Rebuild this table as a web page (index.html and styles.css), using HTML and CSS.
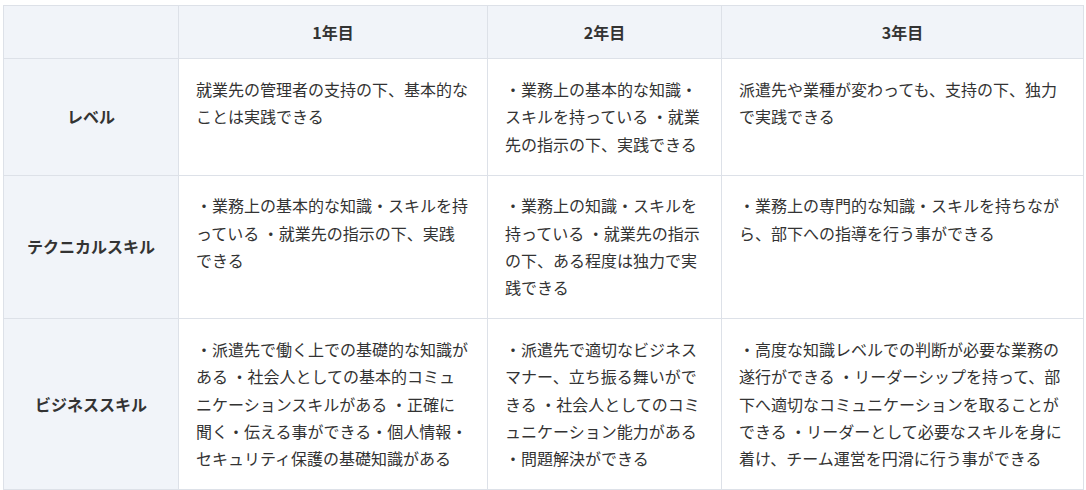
FILE: index.html
```html
<!DOCTYPE html>
<html lang="ja">
<head>
<meta charset="utf-8">
<title>スキル表</title>
<link rel="stylesheet" href="styles.css">
</head>
<body>
<div class="wrap">
<table class="skills">
  <colgroup>
    <col class="c0"><col class="c1"><col class="c2"><col class="c3">
  </colgroup>
  <thead>
    <tr>
      <th class="head corner"></th>
      <th class="head">1年目</th>
      <th class="head">2年目</th>
      <th class="head">3年目</th>
    </tr>
  </thead>
  <tbody>
    <tr>
      <th class="rowhead">レベル</th>
      <td>就業先の管理者の支持の下、基本的なことは実践できる</td>
      <td>・業務上の基本的な知識・スキルを持っている ・就業先の指示の下、実践できる</td>
      <td>派遣先や業種が変わっても、支持の下、独力で実践できる</td>
    </tr>
    <tr>
      <th class="rowhead">テクニカルスキル</th>
      <td>・業務上の基本的な知識・スキルを持っている ・就業先の指示の下、実践できる</td>
      <td>・業務上の知識・スキルを持っている ・就業先の指示の下、ある程度は独力で実践できる</td>
      <td>・業務上の専門的な知識・スキルを持ちながら、部下への指導を行う事ができる</td>
    </tr>
    <tr>
      <th class="rowhead">ビジネススキル</th>
      <td>・派遣先で働く上での基礎的な知識がある ・社会人としての基本的コミュニケーションスキルがある ・正確に聞く・伝える事ができる・個人情報・セキュリティ保護の基礎知識がある</td>
      <td>・派遣先で適切なビジネスマナー、立ち振る舞いができる ・社会人としてのコミュニケーション能力がある ・問題解決ができる</td>
      <td>・高度な知識レベルでの判断が必要な業務の遂行ができる ・リーダーシップを持って、部下へ適切なコミュニケーションを取ることができる ・リーダーとして必要なスキルを身に着け、チーム運営を円滑に行う事ができる</td>
    </tr>
  </tbody>
</table>
</div>
</body>
</html>
```

FILE: styles.css
```css
html, body {
  margin: 0;
  padding: 0;
  background: #ffffff;
}

body {
  font-family: "Noto Sans CJK JP", "Noto Sans", sans-serif;
  font-size: 16px;
  color: #333333;
}

.wrap {
  padding: 5px 3px 0 3px;
}

.skills {
  border-collapse: collapse;
  table-layout: fixed;
  width: 1080px;
}

.c0 { width: 175px; }
.c1 { width: 309px; }
.c2 { width: 234px; }
.c3 { width: 362px; }

.skills th,
.skills td {
  border: 1px solid #dde1e8;
  line-height: 27.4px;
}

.skills td {
  padding: 16.5px 18px 16.5px 17px;
  vertical-align: top;
  text-align: left;
  font-weight: 400;
}

.head {
  background: #f1f4f9;
  font-weight: 700;
  text-align: center;
  padding: 12.5px 16px;
  line-height: 27.2px;
}

.rowhead {
  background: #f1f4f9;
  font-weight: 700;
  text-align: center;
  vertical-align: middle;
  padding: 16.5px 12px;
}
```
